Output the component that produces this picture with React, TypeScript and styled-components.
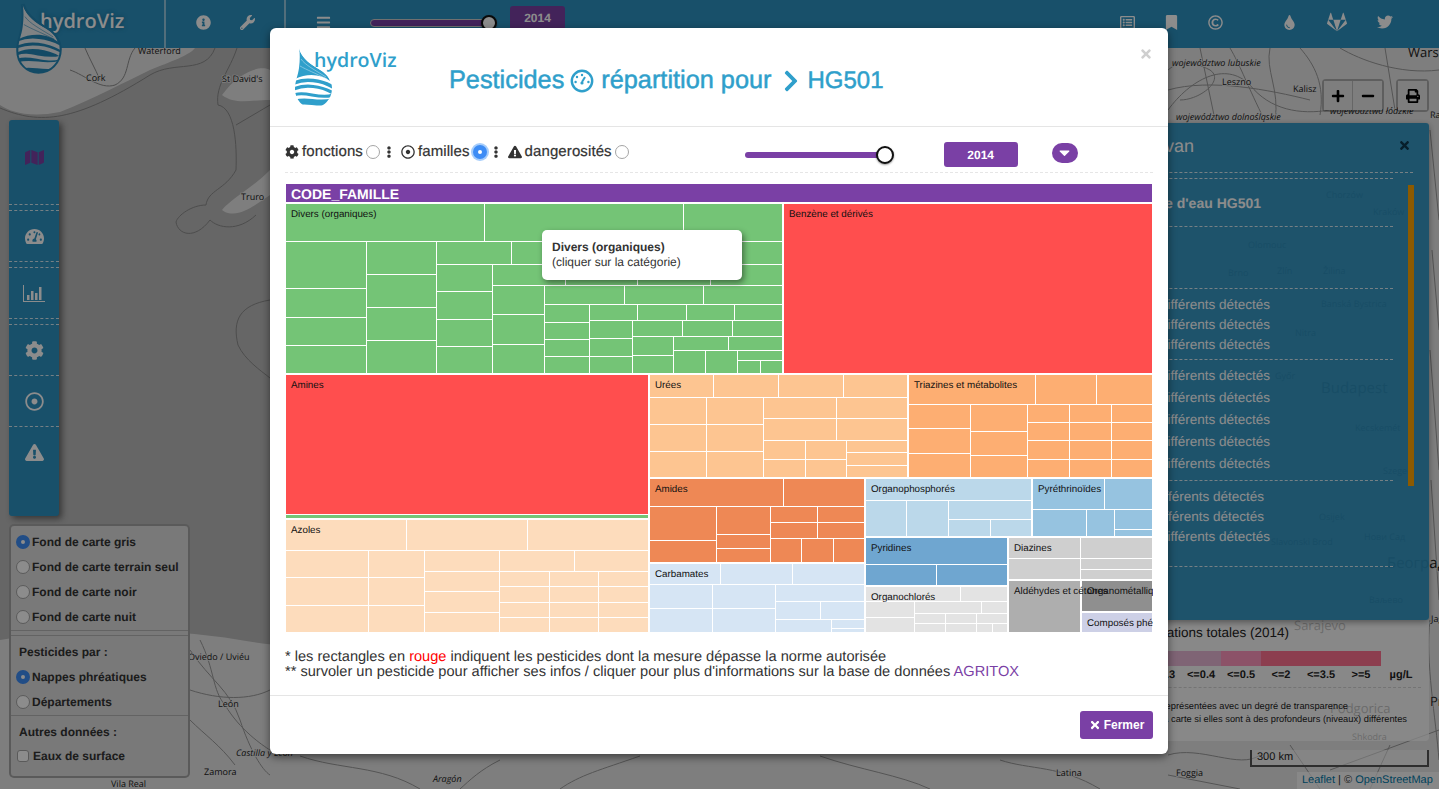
import * as React from 'react';
import styled, { createGlobalStyle } from 'styled-components';
import {
    FaBars,
    FaBookmark,
    FaCaretDown,
    FaChevronRight,
    FaCog,
    FaEllipsisV,
    FaExclamationTriangle,
    FaGitlab,
    FaInfoCircle,
    FaMap,
    FaMinus,
    FaPlus,
    FaPrint,
    FaRegCopyright,
    FaRegDotCircle,
    FaRegListAlt,
    FaTachometerAlt,
    FaTimes,
    FaTint,
    FaTwitter,
    FaWrench,
} from 'react-icons/fa';

const blue = '#2d92c1';
const titleBlue = '#2f9fcb';
const purple = '#7a40a5';
const sans = "'Liberation Sans', Arial, sans-serif";

type Rect = [number, number, number, number];

// cells of one row: xs are the left edges, the last one is the end of the row
const row = (y0: number, y1: number, xs: number[]): Rect[] =>
    xs.slice(0, -1).map((x, i) => [x, y0, xs[i + 1] - 1, y1] as Rect);

const col = (x0: number, x1: number, ys: number[]): Rect[] =>
    ys.slice(0, -1).map((y, i) => [x0, y, x1, ys[i + 1] - 1] as Rect);

interface IGroup {
    name?: string;
    color: string;
    cells: Rect[];
}

const groups: IGroup[] = [
    {
        name: 'Divers (organiques)',
        color: '#74c476',
        cells: [
            ...row(204, 241, [286, 485, 684, 783]),
            ...col(286, 366, [242, 289, 318, 346, 374]),
            ...col(367, 436, [242, 275, 308, 341, 374]),
            ...row(242, 264, [437, 512, 602, 693, 783]),
            ...col(437, 492, [265, 292, 320, 347, 374]),
            ...row(265, 285, [493, 566, 638, 711, 783]),
            ...col(493, 544, [286, 315, 345, 374]),
            ...row(286, 304, [545, 625, 704, 783]),
            ...col(545, 589, [305, 323, 340, 357, 374]),
            ...row(305, 320, [590, 638, 687, 735, 783]),
            ...col(590, 632, [321, 339, 357, 374]),
            ...row(321, 336, [633, 683, 733, 783]),
            ...col(633, 673, [337, 356, 374]),
            ...row(337, 350, [674, 729, 783]),
            ...row(351, 373, [674, 706, 738]),
            ...row(351, 360, [738, 783]),
            ...row(361, 373, [738, 761, 783]),
        ],
    },
    { name: 'Benzène et dérivés', color: '#ff4e4e', cells: [[784, 204, 1152, 373]] },
    { name: 'Amines', color: '#ff4e4e', cells: [[286, 375, 648, 514]] },
    { color: '#74c476', cells: [[286, 515, 648, 518]] },
    {
        name: 'Azoles',
        color: '#fddcbc',
        cells: [
            ...row(520, 550, [286, 407, 528, 649]),
            ...col(286, 368, [551, 578, 606, 633]),
            ...col(369, 424, [551, 578, 606, 633]),
            ...col(425, 499, [551, 572, 592, 613, 633]),
            ...row(551, 571, [500, 575, 649]),
            ...row(572, 586, [500, 550, 599, 649]),
            ...row(587, 602, [500, 550, 599, 649]),
            ...row(603, 617, [500, 550, 599, 649]),
            ...row(618, 632, [500, 550, 599, 649]),
        ],
    },
    {
        name: 'Urées',
        color: '#fdc591',
        cells: [
            ...row(375, 397, [650, 714, 779, 844, 908]),
            ...col(650, 706, [398, 425, 452, 478]),
            ...col(707, 763, [398, 425, 452, 478]),
            ...row(398, 418, [764, 837, 908]),
            ...row(419, 440, [764, 837, 908]),
            ...col(764, 805, [441, 460, 478]),
            ...col(806, 846, [441, 460, 478]),
            ...col(847, 907, [441, 453, 466, 478]),
        ],
    },
    {
        name: 'Triazines et métabolites',
        color: '#fdae72',
        cells: [
            ...row(375, 404, [909, 1036, 1097, 1153]),
            ...col(909, 970, [405, 429, 454, 478]),
            ...col(971, 1027, [405, 432, 456, 478]),
            ...row(405, 422, [1028, 1070, 1112, 1153]),
            ...row(423, 440, [1028, 1070, 1112, 1153]),
            ...row(441, 459, [1028, 1070, 1112, 1153]),
            ...row(460, 477, [1028, 1070, 1112, 1153]),
        ],
    },
    {
        name: 'Amides',
        color: '#ee8855',
        cells: [
            ...row(479, 506, [650, 784, 865]),
            ...col(650, 716, [507, 541, 563]),
            ...col(717, 770, [507, 535, 549, 563]),
            ...row(507, 522, [771, 818, 865]),
            ...row(523, 538, [771, 818, 865]),
            ...row(539, 562, [771, 802, 834, 865]),
        ],
    },
    {
        name: 'Carbamates',
        color: '#d6e5f4',
        cells: [
            ...row(564, 584, [650, 721, 793, 865]),
            ...col(650, 712, [585, 609, 633]),
            ...col(713, 775, [585, 609, 633]),
            ...row(585, 601, [776, 865]),
            ...row(602, 619, [776, 821, 865]),
            ...row(620, 632, [776, 832]),
            ...col(832, 864, [620, 629, 633]),
        ],
    },
    {
        name: 'Organophosphorés',
        color: '#bbd8ea',
        cells: [
            ...row(479, 500, [866, 1032]),
            ...row(501, 536, [866, 907, 949]),
            ...row(501, 519, [949, 1032]),
            ...row(520, 536, [949, 991, 1032]),
        ],
    },
    {
        name: 'Pyréthrinoïdes',
        color: '#96c3e0',
        cells: [
            ...row(479, 509, [1033, 1105, 1153]),
            ...row(510, 536, [1033, 1087, 1115]),
            ...col(1115, 1152, [510, 530, 537]),
        ],
    },
    {
        name: 'Pyridines',
        color: '#6fa6d0',
        cells: [...row(538, 564, [866, 1008]), ...row(565, 585, [866, 937, 1008])],
    },
    {
        name: 'Organochlorés',
        color: '#e3e3e3',
        cells: [
            ...row(587, 601, [866, 961, 1008]),
            ...col(866, 914, [602, 618, 633]),
            ...row(602, 613, [915, 982, 1008]),
            ...row(614, 623, [915, 946, 977, 1008]),
            ...row(624, 632, [915, 946, 977, 993, 1008]),
        ],
    },
    {
        name: 'Diazines',
        color: '#cfcfcf',
        cells: [
            ...row(538, 558, [1009, 1081, 1153]),
            ...row(559, 579, [1009, 1081]),
            ...col(1081, 1152, [559, 570, 580]),
        ],
    },
    { name: 'Aldéhydes et cétones', color: '#aeaeae', cells: [[1009, 581, 1080, 632]] },
    { name: 'Organométalliques', color: '#8f8f8f', cells: [[1082, 581, 1152, 611]] },
    { name: 'Composés phénoliques', color: '#cdd0e6', cells: [[1082, 613, 1152, 632]] },
];

const mapLabels: { x: number; y: number; text: string; italic?: boolean; size?: number }[] = [
    { x: 138, y: 54, text: 'Waterford' },
    { x: 86, y: 81, text: 'Cork' },
    { x: 222, y: 82, text: "St David's" },
    { x: 241, y: 200, text: 'Truro' },
    { x: 188, y: 660, text: 'Oviedo / Uviéu' },
    { x: 218, y: 707, text: 'León' },
    { x: 204, y: 775, text: 'Zamora' },
    { x: 236, y: 756, text: 'Castilla y León', italic: true },
    { x: 111, y: 787, text: 'Vila Real' },
    { x: 433, y: 782, text: 'Aragón', italic: true },
    { x: 1056, y: 776, text: 'Latina' },
    { x: 1176, y: 776, text: 'Foggia' },
    { x: 1222, y: 85, text: 'Leszno' },
    { x: 1293, y: 92, text: 'Kalisz' },
    { x: 1408, y: 57, text: 'Warszawa', size: 13 },
    { x: 1172, y: 66, text: 'województwo lubuskie', italic: true },
    { x: 1176, y: 120, text: 'województwo dolnośląskie', italic: true },
    { x: 1330, y: 114, text: 'województwo łódzkie', italic: true },
    { x: 1430, y: 118, text: 'Radom' },
    { x: 1326, y: 198, text: 'Chorzów' },
    { x: 1373, y: 215, text: 'Kraków' },
    { x: 1248, y: 248, text: 'Olomouc' },
    { x: 1228, y: 276, text: 'Brno' },
    { x: 1277, y: 274, text: 'Zlín' },
    { x: 1323, y: 274, text: 'Žilina' },
    { x: 1321, y: 307, text: 'Banská Bystrica' },
    { x: 1295, y: 336, text: 'Nitra' },
    { x: 1275, y: 379, text: 'Győr' },
    { x: 1321, y: 393, text: 'Budapest', size: 15 },
    { x: 1355, y: 431, text: 'Kecskemét' },
    { x: 1383, y: 474, text: 'Szeged' },
    { x: 1319, y: 520, text: 'Osijek' },
    { x: 1271, y: 545, text: 'Slavonski Brod' },
    { x: 1364, y: 540, text: 'Нови Сад' },
    { x: 1387, y: 568, text: 'Београд', size: 15 },
    { x: 1369, y: 603, text: 'Ваљево' },
    { x: 1294, y: 630, text: 'Sarajevo', size: 13 },
    { x: 1330, y: 713, text: 'Podgorica', size: 13 },
    { x: 1352, y: 740, text: 'Shkodra' },
    { x: 1431, y: 622, text: 'Jagodina' },
    { x: 1430, y: 706, text: 'Pristina', size: 13 },
];

const GlobalStyle = createGlobalStyle`
    html, body {
        margin: 0;
        height: 100%;
        overflow: hidden;
        font-family: ${sans};
        text-rendering: geometricPrecision;
    }
    * {
        box-sizing: border-box;
    }
`;

const Page = styled.div`
    position: relative;
    width: 100%;
    height: 100vh;
    background-color: #bababa;
    overflow: hidden;
`;

const MapDrawing = styled.svg`
    position: absolute;
    top: 0;
    left: 0;
    font-family: 'Open Sans', sans-serif;
`;

const TopBar = styled.header`
    position: relative;
    display: flex;
    align-items: stretch;
    height: 48px;
    background-color: ${blue};
    color: #fff;
`;

const Brand = styled.div`
    width: 166px;
    border-right: 2px solid rgba(255, 255, 255, 0.5);
    color: #fff;
    font-family: 'Open Sans', sans-serif;
    font-weight: 600;
    font-size: 20px;
    line-height: 42px;
    padding-left: 40px;
    text-shadow: 0 0 4px #1e7aa6, 0 0 4px #1e7aa6;
`;

const BarGroup = styled.div<{ $width?: number; $grow?: boolean; $divider?: boolean; $pad?: number }>`
    display: flex;
    align-items: center;
    width: ${(props) => (props.$width ? `${props.$width}px` : 'auto')};
    flex-grow: ${(props) => (props.$grow ? 1 : 0)};
    padding: 0 ${(props) => props.$pad || 0}px 4px ${(props) => props.$pad || 0}px;
    border-right: ${(props) => (props.$divider ? '2px solid rgba(255, 255, 255, 0.5)' : 'none')};
`;

const BarIcon = styled.span<{ $width?: number; $size?: number; $left?: number }>`
    display: flex;
    justify-content: center;
    width: ${(props) => props.$width || 44}px;
    margin-left: ${(props) => props.$left || 0}px;
    font-size: ${(props) => props.$size || 15}px;
`;

const Spacer = styled.div`
    flex-grow: 1;
`;

const BarSlider = styled.div`
    position: relative;
    width: 127px;
    height: 8px;
    margin-left: 25px;
    background-color: ${purple};
    border: 1px solid #ccc;
    border-radius: 4px;
    margin-top: 2px;
`;

const Knob = styled.span<{ $size: number }>`
    position: absolute;
    right: -1px;
    top: 50%;
    width: ${(props) => props.$size}px;
    height: ${(props) => props.$size}px;
    margin-top: ${(props) => -props.$size / 2}px;
    background-color: #fff;
    border: 2px solid #111;
    border-radius: 50%;
    box-shadow: 0 1px 2px rgba(0, 0, 0, 0.4);
`;

const YearBadge = styled.div<{ $width: number; $height: number }>`
    display: flex;
    align-items: center;
    justify-content: center;
    width: ${(props) => props.$width}px;
    height: ${(props) => props.$height}px;
    background-color: ${purple};
    border-radius: 3px;
    color: #fff;
    font-weight: 700;
    font-size: 12px;
`;

const BarBadge = styled.div`
    align-self: flex-start;
    margin: 6px 0 0 13px;
`;

const LeftColumn = styled.div`
    position: absolute;
    top: 120px;
    left: 9px;
    display: flex;
    flex-direction: column;
    gap: 8px;
`;

const SideBar = styled.nav`
    width: 50px;
    height: 396px;
    background-color: ${blue};
    border-radius: 3px;
    box-shadow: 3px 3px 6px rgba(0, 0, 0, 0.45);
    color: #fff;
`;

const SideItem = styled.div<{ $height: number; $top?: boolean; $bottom?: boolean; $gap?: number; $active?: boolean; $pad?: number }>`
    display: flex;
    align-items: center;
    justify-content: center;
    height: ${(props) => props.$height}px;
    margin-top: ${(props) => props.$gap || 0}px;
    padding-bottom: ${(props) => props.$pad || 0}px;
    border-top: ${(props) => (props.$top ? '1px dashed rgba(255, 255, 255, 0.8)' : 'none')};
    border-bottom: ${(props) => (props.$bottom ? '1px dashed rgba(255, 255, 255, 0.8)' : 'none')};
    color: ${(props) => (props.$active ? purple : '#fff')};
    font-size: 19px;
`;

const LayerPanel = styled.div`
    width: 181px;
    height: 254px;
    padding: 3px 0 0;
    background-color: #dcdcdc;
    border: 2px solid rgba(0, 0, 0, 0.25);
    border-radius: 5px;
    color: #333;
    font-size: 12px;
    font-weight: 700;
`;

const LayerRow = styled.div<{ $height?: number }>`
    display: flex;
    align-items: center;
    gap: 1px;
    height: ${(props) => props.$height || 25}px;
    padding-left: 5px;
    white-space: nowrap;
`;

const LayerTitle = styled.div`
    display: flex;
    align-items: center;
    height: 25px;
    padding-left: 8px;
`;

const LayerRule = styled.div<{ $top: number; $bottom: number }>`
    margin: ${(props) => props.$top}px 0 ${(props) => props.$bottom}px;
    border-top: 1px solid rgba(0, 0, 0, 0.18);
`;

const Radio = styled.input.attrs({ type: 'radio', readOnly: true })<{ $glow?: boolean; $left?: number }>`
    appearance: none;
    flex-shrink: 0;
    width: 14px;
    height: 14px;
    margin: 0 1px 0 ${(props) => props.$left || 0}px;
    border: 1px solid #a5a5a5;
    border-radius: 50%;
    background-color: #fff;
    &:checked {
        border: 5px solid #3d8cf5;
        background-color: #fff;
        box-shadow: ${(props) => (props.$glow ? '0 0 0 2px #a6cdfb' : 'none')};
    }
`;

const Check = styled.input.attrs({ type: 'checkbox', readOnly: true })`
    appearance: none;
    flex-shrink: 0;
    width: 12px;
    height: 12px;
    margin: 0 3px 0 1px;
    border: 1px solid #a5a5a5;
    border-radius: 3px;
    background-color: #fff;
`;

const RightDock = styled.div`
    position: absolute;
    top: 79px;
    right: 10px;
    width: 400px;
    display: flex;
    flex-direction: column;
`;

const MapControls = styled.div`
    display: flex;
    justify-content: flex-end;
    gap: 12px;
    height: 44px;
`;

const ControlBox = styled.div`
    display: flex;
    align-self: flex-start;
    height: 33px;
    background-clip: padding-box;
    border: 2px solid rgba(0, 0, 0, 0.25);
    border-radius: 4px;
`;

const ControlButton = styled.div<{ $split?: boolean }>`
    display: flex;
    align-items: center;
    justify-content: center;
    width: 29px;
    background-color: #e6e6e6;
    border-right: ${(props) => (props.$split ? '1px solid #bbb' : 'none')};
    color: #000;
    font-size: 14px;
`;

const MeasurePanel = styled.section`
    position: relative;
    height: 497px;
    background-color: rgba(45, 146, 193, 0.95);
    border-radius: 0 3px 3px 0;
    color: #fff;
    box-shadow: 0 2px 6px rgba(0, 0, 0, 0.4);
    z-index: 1;
`;

const PanelHead = styled.div`
    height: 50px;
    margin-right: 16px;
    border-bottom: 1px dashed rgba(255, 255, 255, 0.8);
    font-size: 18px;
    line-height: 46px;
    text-align: right;
    padding-right: 219px;
`;

const PanelClose = styled.span`
    position: absolute;
    top: 16px;
    right: 18px;
    color: #0d3a50;
    font-size: 13px;
`;

const Scrollbar = styled.div`
    position: absolute;
    top: 62px;
    right: 15px;
    width: 6px;
    height: 301px;
    background-color: #ffa500;
`;

const PanelBody = styled.div`
    margin: 5px 36px 0 0;
    border-top: 1px dashed rgba(255, 255, 255, 0.8);
    text-align: right;
`;

const PanelSection = styled.div<{ $height: number; $top?: number; $lineHeight?: number }>`
    height: ${(props) => props.$height}px;
    padding: ${(props) => props.$top || 0}px 123px 0 0;
    border-bottom: 1px dashed rgba(255, 255, 255, 0.8);
    font-size: 13.5px;
    line-height: ${(props) => props.$lineHeight || 20}px;
`;

const PanelLine = styled.div<{ $inset?: number }>`
    margin-right: ${(props) => props.$inset || 0}px;
    white-space: nowrap;
`;

const PanelSubtitle = styled.div`
    padding: 14px 9px 0 0;
    font-size: 14px;
    font-weight: 700;
    white-space: nowrap;
`;

const Legend = styled.section`
    height: 121px;
    background-color: rgba(255, 255, 255, 0.72);
    border-radius: 0 0 4px 4px;
    color: #222;
`;

const LegendTitle = styled.div`
    height: 31px;
    padding-right: 140px;
    font-size: 13.5px;
    line-height: 26px;
    text-align: right;
`;

const LegendBar = styled.div`
    display: flex;
    justify-content: flex-end;
    height: 15px;
    margin-right: 48px;
`;

const LegendSwatch = styled.div<{ $color: string; $width: number }>`
    width: ${(props) => props.$width}px;
    background-color: ${(props) => props.$color};
`;

const LegendScale = styled.div`
    display: flex;
    justify-content: flex-end;
    height: 20px;
    margin: 2px 8px 12px 0;
    border-bottom: 1px dashed rgba(0, 0, 0, 0.15);
`;

const LegendValue = styled.div`
    width: 40px;
    font-size: 11px;
    font-weight: 700;
    line-height: 14px;
    text-align: center;
    white-space: nowrap;
`;

const LegendNote = styled.div<{ $inset: number }>`
    padding-right: ${(props) => props.$inset}px;
    font-size: 9.3px;
    line-height: 13px;
    text-align: right;
    white-space: nowrap;
`;

const MapFooter = styled.div`
    position: absolute;
    right: 0;
    bottom: 0;
    display: flex;
    flex-direction: column;
    align-items: flex-end;
`;

const ScaleBar = styled.div`
    width: 179px;
    height: 17px;
    margin: 0 10px 5px 0;
    padding-left: 5px;
    border: 2px solid #555;
    border-top: none;
    background-color: rgba(255, 255, 255, 0.5);
    font-size: 11px;
    line-height: 14px;
    color: #222;
`;

const Attribution = styled.div`
    width: 142px;
    height: 17px;
    padding-left: 5px;
    background-color: rgba(255, 255, 255, 0.7);
    font-size: 11px;
    line-height: 16px;
    color: #333;
    white-space: nowrap;
    & a {
        color: #0078a8;
        text-decoration: none;
    }
`;

const Backdrop = styled.div`
    position: absolute;
    top: 0;
    right: 0;
    bottom: 0;
    left: 0;
    background-color: rgba(0, 0, 0, 0.45);
    z-index: 5;
`;

const Dialog = styled.div`
    display: flex;
    flex-direction: column;
    width: 898px;
    height: 726px;
    margin: 28px 0 0 270px;
    background-color: #fff;
    border-radius: 6px;
    box-shadow: 0 3px 9px rgba(0, 0, 0, 0.5);
    color: #333;
`;

const DialogHeader = styled.div`
    position: relative;
    display: flex;
    align-items: center;
    height: 99px;
    padding-left: 23px;
    border-bottom: 1px solid #e5e5e5;
`;

const LogoWrap = styled.div`
    position: relative;
    width: 156px;
    height: 60px;
    margin-top: -3px;
`;

const LogoName = styled.span`
    position: absolute;
    top: 1px;
    left: 21px;
    color: ${titleBlue};
    font-family: 'Open Sans', sans-serif;
    font-weight: 600;
    font-size: 19.6px;
    line-height: 26px;
`;

const DialogTitle = styled.h1`
    display: flex;
    align-items: center;
    margin: 7px 0 0 0;
    color: ${titleBlue};
    font-size: 25.3px;
    font-weight: 400;
    -webkit-text-stroke: 0.5px ${titleBlue};
    white-space: nowrap;
`;

const TitleIcon = styled.span<{ $left: number; $right: number; $size?: number }>`
    display: flex;
    margin: 0 ${(props) => props.$right}px 0 ${(props) => props.$left}px;
    font-size: ${(props) => props.$size || 20}px;
`;

const TitleCode = styled.span`
    font-size: 24px;
`;

const DialogClose = styled.span`
    position: absolute;
    top: 19px;
    right: 15px;
    color: #cfcfcf;
    font-size: 14px;
    display: flex;
`;

const DialogBody = styled.div`
    flex-grow: 1;
    padding: 0 15px;
`;

const ToolRow = styled.div`
    display: flex;
    align-items: center;
    height: 46px;
    padding-top: 4px;
    border-bottom: 1px dashed #e6e6e6;
    white-space: nowrap;
`;

const ToolLabel = styled.span`
    display: flex;
    align-items: center;
    gap: 3px;
    font-size: 15px;
    letter-spacing: 0.1px;
    -webkit-text-stroke: 0.2px #333;
    & svg {
        font-size: 14px;
    }
`;

const ToolDots = styled.span`
    display: flex;
    justify-content: center;
    width: 14px;
    margin: 0 5px 0 1px;
    font-size: 12px;
`;

const ToolSlider = styled.div`
    position: relative;
    width: 148px;
    height: 6px;
    margin: 7px 0 0 115px;
    background-color: ${purple};
    border-radius: 3px;
`;

const ToolBadge = styled.div`
    margin: 6px 0 0 51px;
`;

const CaretButton = styled.div`
    display: flex;
    align-items: center;
    justify-content: center;
    width: 26px;
    height: 20px;
    margin: 2px 0 0 34px;
    background-color: ${purple};
    border-radius: 10px;
    color: #fff;
    font-size: 17px;
`;

const ChartFrame = styled.div`
    position: relative;
    margin: 11px 0 0 1px;
    width: 867px;
    height: 449px;
`;

const ChartDrawing = styled.svg`
    display: block;
    font-family: ${sans};
`;

const ChartTooltip = styled.div`
    position: absolute;
    top: 46px;
    left: 256px;
    width: 200px;
    height: 50px;
    padding: 10px;
    background-color: #fff;
    border-radius: 5px;
    box-shadow: 2px 3px 6px rgba(0, 0, 0, 0.45);
    color: #333;
    font-size: 12px;
    line-height: 15px;
    & strong {
        display: block;
    }
`;

const Notes = styled.div`
    margin-top: 17px;
    font-size: 14.6px;
    line-height: 15px;
    color: #333;
    white-space: nowrap;
`;

const Red = styled.span`
    color: #f00;
`;

const Accent = styled.span`
    color: ${purple};
`;

const DialogFooter = styled.div`
    display: flex;
    align-items: flex-start;
    justify-content: flex-end;
    height: 59px;
    padding: 15px 15px 0 0;
    border-top: 1px solid #e5e5e5;
`;

const CloseButton = styled.button`
    display: flex;
    align-items: center;
    justify-content: center;
    gap: 3px;
    width: 73px;
    height: 28px;
    padding: 0;
    background-color: ${purple};
    border: none;
    border-radius: 3px;
    color: #fff;
    font-family: ${sans};
    font-size: 12px;
    font-weight: 700;
`;

const HeaderLogoSpot = styled.div`
    position: absolute;
    top: 2px;
    left: 14px;
`;

interface ILogo {
    id: string;
    ink: string;
    body?: string;
    line: string;
    width: number;
    height: number;
}

// the water drop of the hydroViz logo
const DROP = 'M4 0C6 8 12 14 22 20C31 25 37 31 37 40C37 52 28 60 18 60C8 60 0 52 0 41C0 33 3 28 4 20C5 12 5 6 4 0Z';

const Logo = ({ id, ink, body, line, width, height }: ILogo) => (
    <svg width={width} height={height} viewBox="-2 -2 41 64" style={{ display: 'block' }}>
        <defs>
            <clipPath id={id}>
                <path d={DROP} />
            </clipPath>
        </defs>
        {body && <path d={DROP} fill={body} stroke={body} strokeWidth="3.5" />}
        <g clipPath={`url(#${id})`} fill="none" stroke={ink}>
            <path d="M4 0C6 8 12 14 22 20C28 23 33 27 35 33C26 26 12 25 0 31C2 22 5 12 4 0Z" fill={ink} stroke="none" />
            <path d="M6 11C10 17 20 22 31 29" stroke={line} strokeWidth="0.5" />
            <path d="M5 18C12 22 20 25 32 31" stroke={line} strokeWidth="0.5" />
            <path d="M-1 35C10 30 26 32 38 39" strokeWidth="3.4" />
            <path d="M-1 41C10 36 26 38 38 45" strokeWidth="3.2" />
            <path d="M-1 47C10 42 24 52 38 47" strokeWidth="3" />
            <path d="M-1 55C12 50 22 58 38 53" strokeWidth="6" />
        </g>
    </svg>
);

const BaseMap = () => (
    <MapDrawing width="1439" height="789" viewBox="0 0 1439 789">
        <g fill="#e6e6e6" stroke="none">
            <path d="M0 48H195C190 55 170 62 150 70C125 82 95 98 60 112C30 118 10 112 0 105Z" />
            <path d="M222 95C240 70 262 65 270 70V100C250 100 235 105 222 95Z" />
            <path d="M222 210C232 198 250 190 270 170V195C255 205 240 218 225 212Z" />
            <path d="M0 789V640C60 630 150 625 240 640C300 650 420 660 560 650C700 640 900 650 1060 660C1100 680 1120 720 1180 740C1240 760 1250 700 1300 680V48H1439V789Z" />
            <path d="M1168 48H1439V789H1168Z" />
        </g>
        <g fill="none" stroke="#8c8c8c" strokeWidth="1">
            <path d="M0 108C40 125 75 122 150 75C175 60 205 75 215 48" />
            <path d="M85 48C90 60 95 68 100 80" />
            <path d="M70 70C85 75 100 90 115 85C130 78 125 60 135 48" />
            <path d="M237 48C230 70 215 85 218 105C235 108 237 145 236 170C225 190 208 190 206 205C192 205 178 215 176 222C178 235 195 240 210 220C218 228 238 232 256 215" />
            <path d="M236 125L270 105" />
            <path d="M270 300C240 305 232 320 238 345C245 360 260 370 270 378" />
        </g>
        <g fill="none" stroke="#9a9a9a" strokeWidth="1">
            <path d="M190 650C210 680 230 690 240 720C250 750 262 770 270 775" />
            <path d="M190 690C220 700 250 700 270 690" />
            <path d="M200 640C215 670 212 690 225 705C240 730 262 745 270 750" />
            <path d="M190 720C205 735 220 745 235 765" />
            <path d="M1168 90C1210 78 1270 90 1310 100" />
            <path d="M1168 110C1190 80 1225 60 1250 85C1270 110 1300 115 1330 110" />
            <path d="M1230 48C1240 65 1245 80 1262 115" />
            <path d="M1300 48C1315 65 1325 85 1320 115" />
            <path d="M1340 48C1360 60 1400 75 1439 70" />
            <path d="M1385 48L1395 110" />
            <path d="M1168 70C1180 60 1190 60 1210 70C1225 80 1200 100 1180 100" />
            <path d="M1200 48L1215 120" />
            <path d="M1270 48C1265 70 1280 90 1275 120" />
            <path d="M1430 130L1439 220M1432 250L1439 330M1430 350L1439 470M1431 480L1439 600" />
            <path d="M1430 620C1425 660 1436 720 1439 760" />
            <path d="M1168 755C1200 745 1240 770 1260 755" />
            <path d="M1330 770L1439 730" />
            <path d="M1290 745L1320 789M1390 745L1370 789M1168 775L1240 789" />
            <path d="M300 756C340 770 380 765 420 789M500 760C480 770 470 780 460 789" />
            <path d="M640 756C600 770 580 775 560 789M820 756C860 770 900 775 930 789" />
            <path d="M1000 760C1030 770 1060 765 1100 789" />
        </g>
        <g fill="#222">
            {mapLabels.map((label) => (
                <text
                    key={label.text}
                    x={label.x}
                    y={label.y}
                    fontSize={label.size || 9}
                    fontStyle={label.italic ? 'italic' : 'normal'}
                    stroke="#e6e6e6"
                    strokeWidth="1.5"
                    style={{ paintOrder: 'stroke' }}
                >
                    {label.text}
                </text>
            ))}
        </g>
    </MapDrawing>
);

const Treemap = () => (
    <ChartDrawing width="867" height="449" viewBox="286 184 867 449">
        <rect x="286" y="184" width="866" height="18" fill={purple} />
        <text x="291" y="199" fontSize="14" fontWeight="700" fill="#fff">
            CODE_FAMILLE
        </text>
        {groups.map((group) =>
            group.cells.map(([x0, y0, x1, y1]) => (
                <rect
                    key={`${x0}-${y0}`}
                    x={x0}
                    y={y0}
                    width={x1 - x0}
                    height={y1 - y0}
                    fill={group.color}
                />
            ))
        )}
        {/* labels come last: a long one runs over the next family */}
        {groups.map((group) =>
            group.name ? (
                <text
                    key={group.name}
                    x={group.cells[0][0] + 5}
                    y={group.cells[0][1] + 13}
                    fontSize="9.8"
                    fill="#111"
                >
                    {group.name}
                </text>
            ) : null
        )}
    </ChartDrawing>
);

const GaugeMark = () => (
    <svg width="24" height="24" viewBox="0 0 24 24" fill="none" stroke={titleBlue}>
        <circle cx="12" cy="12" r="10.2" strokeWidth="2.4" />
        <path d="M12 13L15 8" strokeWidth="2" />
        <circle cx="12" cy="14" r="1.6" fill={titleBlue} stroke="none" />
        <circle cx="12" cy="6" r="1.2" fill={titleBlue} stroke="none" />
        <circle cx="7" cy="8" r="1.2" fill={titleBlue} stroke="none" />
        <circle cx="5.6" cy="13" r="1.2" fill={titleBlue} stroke="none" />
        <circle cx="18.4" cy="13" r="1.2" fill={titleBlue} stroke="none" />
    </svg>
);

// thin axes with four bars, as the font icon of the sidebar has them
const BarsMark = () => (
    <svg width="22" height="17" viewBox="0 0 22 17" fill="currentColor">
        <path d="M0 0H1V16H22V17H0Z" />
        <rect x="4" y="10" width="2.5" height="5" />
        <rect x="8" y="6" width="2.5" height="9" />
        <rect x="12" y="8" width="2.5" height="7" />
        <rect x="16" y="2" width="2.5" height="13" />
    </svg>
);

const App = () => (
    <Page>
        <GlobalStyle />
        <BaseMap />
        <TopBar>
            <Brand>hydroViz</Brand>
            <BarGroup $width={120} $divider $pad={15}>
                <BarIcon><FaInfoCircle /></BarIcon>
                <BarIcon><FaWrench /></BarIcon>
            </BarGroup>
            <BarGroup $grow>
                <BarIcon $left={15}><FaBars /></BarIcon>
                <BarSlider>
                    <Knob $size={16} />
                </BarSlider>
                <BarBadge>
                    <YearBadge $width={55} $height={24}>2014</YearBadge>
                </BarBadge>
                <Spacer />
                <BarIcon><FaRegListAlt /></BarIcon>
                <BarIcon><FaBookmark /></BarIcon>
                <BarIcon><FaRegCopyright /></BarIcon>
                <BarIcon $width={16} />
            </BarGroup>
            <BarGroup $width={186}>
                <BarIcon $width={13} />
                <BarIcon $width={47}><FaTint /></BarIcon>
                <BarIcon $width={48} $size={20}><FaGitlab /></BarIcon>
                <BarIcon $width={48} $size={16}><FaTwitter /></BarIcon>
            </BarGroup>
        </TopBar>
        <HeaderLogoSpot>
            <Logo id="bar-logo" ink="#e8edf0" body="#2388b8" line="#2388b8" width={50} height={72} />
        </HeaderLogoSpot>
        <LeftColumn>
            <SideBar>
                <SideItem $height={85} $bottom $active $pad={9}><FaMap /></SideItem>
                <SideItem $height={52} $gap={5} $top $bottom><FaTachometerAlt /></SideItem>
                <SideItem $height={52} $gap={5} $top $bottom><BarsMark /></SideItem>
                <SideItem $height={52} $gap={5} $top $bottom><FaCog /></SideItem>
                <SideItem $height={51} $bottom><FaRegDotCircle /></SideItem>
                <SideItem $height={51}><FaExclamationTriangle /></SideItem>
            </SideBar>
            <LayerPanel>
                <LayerRow><Radio checked />Fond de carte gris</LayerRow>
                <LayerRow><Radio />Fond de carte terrain seul</LayerRow>
                <LayerRow><Radio />Fond de carte noir</LayerRow>
                <LayerRow><Radio />Fond de carte nuit</LayerRow>
                <LayerRule $top={1} $bottom={4} />
                <LayerRule $top={0} $bottom={3} />
                <LayerTitle>Pesticides par :</LayerTitle>
                <LayerRow><Radio checked />Nappes phréatiques</LayerRow>
                <LayerRow><Radio />Départements</LayerRow>
                <LayerRule $top={1} $bottom={3} />
                <LayerTitle>Autres données :</LayerTitle>
                <LayerRow $height={24}><Check />Eaux de surface</LayerRow>
            </LayerPanel>
        </LeftColumn>
        <RightDock>
            <MapControls>
                <ControlBox>
                    <ControlButton $split><FaPlus /></ControlButton>
                    <ControlButton><FaMinus /></ControlButton>
                </ControlBox>
                <ControlBox>
                    <ControlButton><FaPrint /></ControlButton>
                </ControlBox>
            </MapControls>
            <MeasurePanel>
                <PanelHead>Nappe Kervan</PanelHead>
                <PanelClose><FaTimes /></PanelClose>
                <Scrollbar />
                <PanelBody>
                    <PanelSection $height={48}>
                        <PanelSubtitle>Masse d&apos;eau HG501</PanelSubtitle>
                    </PanelSection>
                    <PanelSection $height={62} />
                    <PanelSection $height={71} $top={6}>
                        <PanelLine>12 pesticides différents détectés</PanelLine>
                        <PanelLine>7 pesticides différents détectés</PanelLine>
                        <PanelLine>4 pesticides différents détectés</PanelLine>
                    </PanelSection>
                    <PanelSection $height={121} $top={5} $lineHeight={22}>
                        <PanelLine>9 pesticides différents détectés</PanelLine>
                        <PanelLine>6 pesticides différents détectés</PanelLine>
                        <PanelLine>5 pesticides différents détectés</PanelLine>
                        <PanelLine>3 pesticides différents détectés</PanelLine>
                        <PanelLine>2 pesticides différents détectés</PanelLine>
                    </PanelSection>
                    <PanelSection $height={86} $top={6}>
                        <PanelLine $inset={6}>8 pesticides différents détectés</PanelLine>
                        <PanelLine $inset={6}>4 pesticides différents détectés</PanelLine>
                        <PanelLine>3 pesticides différents détectés</PanelLine>
                    </PanelSection>
                </PanelBody>
            </MeasurePanel>
            <Legend>
                <LegendTitle>Concentrations totales (2014)</LegendTitle>
                <LegendBar>
                    <LegendSwatch $color="#e7b6d6" $width={70} />
                    <LegendSwatch $color="#ff95bd" $width={40} />
                    <LegendSwatch $color="#ff7290" $width={120} />
                </LegendBar>
                <LegendScale>
                    <LegendValue>&lt;=0.3</LegendValue>
                    <LegendValue>&lt;=0.4</LegendValue>
                    <LegendValue>&lt;=0.5</LegendValue>
                    <LegendValue>&lt;=2</LegendValue>
                    <LegendValue>&lt;=3.5</LegendValue>
                    <LegendValue>&gt;=5</LegendValue>
                    <LegendValue>µg/L</LegendValue>
                </LegendScale>
                <LegendNote $inset={81}>Les stations sont représentées avec un degré de transparence</LegendNote>
                <LegendNote $inset={22}>et se superposent sur la carte si elles sont à des profondeurs (niveaux) différentes</LegendNote>
            </Legend>
        </RightDock>
        <MapFooter>
            <ScaleBar>300 km</ScaleBar>
            <Attribution><a href="#leaflet">Leaflet</a> | © <a href="#osm">OpenStreetMap</a></Attribution>
        </MapFooter>
        <Backdrop>
            <Dialog>
                <DialogHeader>
                    <LogoWrap>
                        <Logo id="dialog-logo" ink={titleBlue} line="#cfe7f2" width={41} height={64} />
                        <LogoName>hydroViz</LogoName>
                    </LogoWrap>
                    <DialogTitle>
                        Pesticides
                        <TitleIcon $left={6} $right={7}><GaugeMark /></TitleIcon>
                        répartition pour
                        <TitleIcon $left={8} $right={4} $size={24}><FaChevronRight /></TitleIcon>
                        <TitleCode>HG501</TitleCode>
                    </DialogTitle>
                    <DialogClose><FaTimes /></DialogClose>
                </DialogHeader>
                <DialogBody>
                    <ToolRow>
                        <ToolLabel><FaCog /> fonctions</ToolLabel>
                        <Radio $left={3} />
                        <ToolDots><FaEllipsisV /></ToolDots>
                        <ToolLabel><FaRegDotCircle /> familles</ToolLabel>
                        <Radio checked $glow $left={3} />
                        <ToolDots><FaEllipsisV /></ToolDots>
                        <ToolLabel><FaExclamationTriangle /> dangerosités</ToolLabel>
                        <Radio $left={3} />
                        <ToolSlider>
                            <Knob $size={18} />
                        </ToolSlider>
                        <ToolBadge>
                            <YearBadge $width={74} $height={25}>2014</YearBadge>
                        </ToolBadge>
                        <CaretButton><FaCaretDown /></CaretButton>
                    </ToolRow>
                    <ChartFrame>
                        <Treemap />
                        <ChartTooltip>
                            <strong>Divers (organiques)</strong>
                            (cliquer sur la catégorie)
                        </ChartTooltip>
                    </ChartFrame>
                    <Notes>
                        * les rectangles en <Red>rouge</Red> indiquent les pesticides dont la mesure dépasse la norme autorisée
                        <br />
                        ** survoler un pesticide pour afficher ses infos / cliquer pour plus d&apos;informations sur la base de données <Accent>AGRITOX</Accent>
                    </Notes>
                </DialogBody>
                <DialogFooter>
                    <CloseButton><FaTimes /> Fermer</CloseButton>
                </DialogFooter>
            </Dialog>
        </Backdrop>
    </Page>
);

export default App;
